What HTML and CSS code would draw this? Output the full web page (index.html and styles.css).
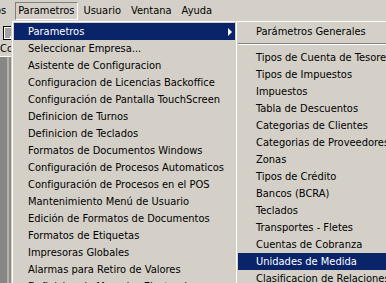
FILE: index.html
```html
<!DOCTYPE html>
<html lang="es">
<head>
<meta charset="utf-8">
<title>Parametros</title>
<link rel="stylesheet" href="styles.css">
</head>
<body>
<div class="app">
  <div class="menubar">
    <span class="mb-item mb-cut">Archivos</span>
    <span class="mb-item active">Parametros</span>
    <span class="mb-item">Usuario</span>
    <span class="mb-item">Ventana</span>
    <span class="mb-item">Ayuda</span>
  </div>
  <div class="workspace">
    <div class="toolbar">
      <div class="tb-button">
        <svg class="tb-icon" width="16" height="16" viewBox="0 0 16 16">
          <rect x="3.5" y="1.5" width="10" height="13" fill="#fff" stroke="#000"/>
          <path d="M5 4h7M5 6h7M5 8h7M5 10h7M5 12h5" stroke="#444" stroke-width="1"/>
        </svg>
        <span class="tb-label">Config</span>
      </div>
    </div>
    <div class="mdi">
      <div class="mdi-child"></div>
    </div>
  </div>

  <div class="menu main-menu">
    <div class="item selected"><span class="label">Parametros</span><span class="arrow"></span></div>
    <div class="item"><span class="label">Seleccionar Empresa...</span></div>
    <div class="item"><span class="label">Asistente de Configuracion</span></div>
    <div class="item"><span class="label">Configuracion de Licencias Backoffice</span></div>
    <div class="item"><span class="label">Configuración de Pantalla TouchScreen</span></div>
    <div class="item"><span class="label">Definicion de Turnos</span></div>
    <div class="item"><span class="label">Definicion de Teclados</span></div>
    <div class="item"><span class="label">Formatos de Documentos Windows</span></div>
    <div class="item"><span class="label">Configuración de Procesos Automaticos</span></div>
    <div class="item"><span class="label">Configuración de Procesos en el POS</span></div>
    <div class="item"><span class="label">Mantenimiento Menú de Usuario</span></div>
    <div class="item"><span class="label">Edición de Formatos de Documentos</span></div>
    <div class="item"><span class="label">Formatos de Etiquetas</span></div>
    <div class="item"><span class="label">Impresoras Globales</span></div>
    <div class="item"><span class="label">Alarmas para Retiro de Valores</span></div>
    <div class="item"><span class="label">Definicion de Monedas Electronicas</span></div>
  </div>

  <div class="menu sub-menu">
    <div class="item"><span class="label">Parámetros Generales</span></div>
    <div class="separator"></div>
    <div class="item"><span class="label">Tipos de Cuenta de Tesoreria</span></div>
    <div class="item"><span class="label">Tipos de Impuestos</span></div>
    <div class="item"><span class="label">Impuestos</span></div>
    <div class="item"><span class="label">Tabla de Descuentos</span></div>
    <div class="item"><span class="label">Categorias de Clientes</span></div>
    <div class="item"><span class="label">Categorias de Proveedores</span></div>
    <div class="item"><span class="label">Zonas</span></div>
    <div class="item"><span class="label">Tipos de Crédito</span></div>
    <div class="item"><span class="label">Bancos (BCRA)</span></div>
    <div class="item"><span class="label">Teclados</span></div>
    <div class="item"><span class="label">Transportes - Fletes</span></div>
    <div class="item"><span class="label">Cuentas de Cobranza</span></div>
    <div class="item selected"><span class="label">Unidades de Medida</span></div>
    <div class="item"><span class="label">Clasificacion de Relaciones</span></div>
  </div>
</div>
</body>
</html>
```

FILE: styles.css
```css
html, body {
  margin: 0;
  padding: 0;
}
body {
  width: 386px;
  height: 283px;
  overflow: hidden;
  background: #808080;
  font-family: "DejaVu Sans", "Liberation Sans", sans-serif;
  font-stretch: condensed;
  font-size: 11px;
  color: #000;
}
.app {
  position: relative;
  width: 386px;
  height: 283px;
  overflow: hidden;
  display: flex;
  flex-direction: column;
}

/* menu bar */
.menubar {
  height: 20px;
  flex: none;
  background: #d4d0c8;
  display: flex;
  align-items: flex-start;
  padding-top: 2px;
  box-sizing: border-box;
}
.mb-item {
  height: 18px;
  line-height: 17px;
  padding: 0 5px;
  box-sizing: border-box;
  white-space: nowrap;
}
.mb-cut {
  margin-left: -41px;
  padding-right: 5px;
}
.mb-item.active {
  border: 1px solid;
  border-color: #808080 #fff #fff #808080;
  padding: 0 3px 0 2px;
  margin-left: 4px;
  line-height: 16px;
}

/* workspace left of the menus */
.workspace {
  flex: 1;
  display: flex;
  flex-direction: column;
}
.toolbar {
  height: 37px;
  flex: none;
  background: #d4d0c8;
  border-bottom: 1px solid #fff;
  box-sizing: border-box;
}
.tb-button {
  display: flex;
  flex-direction: column;
  align-items: flex-start;
  padding: 5px 0 0 0;
  width: 60px;
}
.tb-icon {
  display: block;
}
.tb-label {
  line-height: 14px;
  margin-top: 1px;
}
.mdi {
  flex: 1;
  background: #878787;
  display: flex;
}
.mdi-child {
  margin-left: 7px;
  width: 10px;
  border-left: 2px solid #b4b1aa;
  background: #8a8a8a;
}

/* popup menus */
.menu {
  position: absolute;
  top: 20px;
  background: #d4d0c8;
  border: 1px solid;
  border-color: #d4d0c8 #404040 #404040 #d4d0c8;
  box-shadow: inset 1px 1px #fff, inset -1px -1px #808080;
  padding: 2px;
}
.main-menu {
  left: 11px;
  width: 221px;
}
.sub-menu {
  left: 235px;
  width: 180px;
}
.item {
  height: 17px;
  line-height: 17px;
  display: flex;
  align-items: center;
  white-space: nowrap;
}
.main-menu .item {
  padding-left: 14px;
}
.sub-menu .item {
  padding-left: 18px;
}
.label {
  flex: 1;
}
.item.selected {
  background: #0a246a;
  color: #fff;
}
.arrow {
  width: 0;
  height: 0;
  border-top: 4px solid transparent;
  border-bottom: 4px solid transparent;
  border-left: 4px solid #fff;
  margin-right: 3px;
}
.separator {
  height: 9px;
  box-sizing: border-box;
  padding-top: 3px;
}
.separator::before {
  content: "";
  display: block;
  height: 1px;
  background: #808080;
  border-bottom: 1px solid #fff;
}
```
